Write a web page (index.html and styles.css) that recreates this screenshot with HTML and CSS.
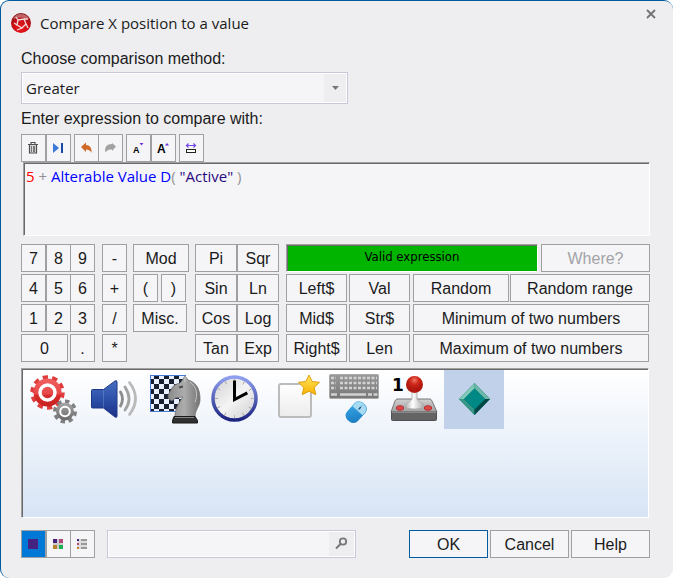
FILE: index.html
```html
<!DOCTYPE html>
<html lang="en">
<head>
<meta charset="utf-8">
<title>Compare X position to a value</title>
<link rel="stylesheet" href="styles.css">
</head>
<body>
<main class="dialog">
  <header class="titlebar">
    <svg class="app-icon" viewBox="0 0 20 20">
      <defs><radialGradient id="app" cx=".5" cy=".75" r=".7"><stop offset="0" stop-color="#f01820"/><stop offset=".6" stop-color="#c80c14"/><stop offset="1" stop-color="#8c1418"/></radialGradient></defs>
      <circle cx="10" cy="10" r="10" fill="url(#app)"/>
      <path d="M2 6a9 9 0 0 1 16 0Q10 3 2 6z" fill="#fff" opacity=".35"/>
      <g fill="none" stroke="#f3dede" stroke-width="1.3"><path d="M7 7l6-1 2 5-4 4-5-3z"/><path d="M7 7L5 4M13 6l4 0M15 11l2 4M11 15l-5 2M6 12l-3-2"/></g>
    </svg>
    <h1 class="title">Compare X position to a value</h1>
    <button class="close" aria-label="Close"><svg viewBox="0 0 10 10"><path d="M1 1l8 8M9 1l-8 8" stroke="#737373" stroke-width="1.800"/></svg></button>
  </header>

  <label class="label" for="method">Choose comparison method:</label>
  <div class="combo">
    <select id="method"><option>Greater</option></select>
    <svg class="combo-arrow" viewBox="0 0 22 28"><path d="M8 12h7l-3.500 4z" fill="#777"/></svg>
  </div>

  <label class="label expr-label" for="expression">Enter expression to compare with:</label>
  <div class="toolbar">
    <div class="joined">
      <button class="btn" aria-label="Clear"><svg viewBox="0 0 23 26"><path d="M6 9.500h10M9 9V7.500h4V9" fill="none" stroke="#505050" stroke-width="1.200"/><path d="M7.500 10v8h7v-8" fill="#d8d8d8" stroke="#505050" stroke-width="1.200"/><path d="M9.500 11v6M11.500 11v6M12.500 11v6" stroke="#606060" stroke-width=".8"/></svg></button>
      <button class="btn" aria-label="Go to end"><svg viewBox="0 0 23 26"><path d="M6 8l6 5-6 5z" fill="#3c78d8"/><path d="M14 8h2v10h-2z" fill="#1648a8"/></svg></button>
    </div>
    <div class="joined overlapped">
      <button class="btn" aria-label="Undo"><svg viewBox="0 0 23 26"><path d="M6 12l5-4.500V10c4 0 6 3 5.500 8-1-2-2.500-3.500-5.500-3.500V17z" fill="#d06a28"/></svg></button>
      <button class="btn" aria-label="Redo"><svg viewBox="0 0 23 26"><path d="M17 11.500L13 8v1C8 9 5 12 6.500 17.500 8 15 10 14.500 13 14.500V16z" fill="#a2a2a2"/></svg></button>
    </div>
    <div class="joined">
      <button class="btn" aria-label="Smaller text"><svg viewBox="0 0 23 26"><text x="6" y="18" class="glyph-small">A</text><path d="M12.500 8h4l-2 2.500z" fill="#7030e0"/></svg></button>
      <button class="btn" aria-label="Larger text"><svg viewBox="0 0 23 26"><text x="5" y="18" class="glyph-large">A</text><path d="M13 10.500L15 8l2 2.500z" fill="#7030e0"/></svg></button>
    </div>
    <button class="btn" aria-label="Fit width"><svg viewBox="0 0 23 26"><path d="M6.500 10.500h9M8.500 8.500l-2 2 2 2M13.500 8.500l2 2-2 2" fill="none" stroke="#7448e8" stroke-width="1.200"/><rect x="6.500" y="14.500" width="9" height="3" fill="#fff" stroke="#222"/></svg></button>
  </div>
  <div class="expression sunken" id="expression" role="textbox" contenteditable="true" aria-label="Expression" spellcheck="false"><span class="num">5</span> + <span class="name">Alterable Value D</span>( <span class="str">"Active"</span> )</div>

  <section class="keypad">
    <div class="digits">
      <div class="joined"><button class="btn">7</button><button class="btn">8</button><button class="btn">9</button></div>
      <div class="joined"><button class="btn">4</button><button class="btn">5</button><button class="btn">6</button></div>
      <div class="joined"><button class="btn">1</button><button class="btn">2</button><button class="btn">3</button></div>
      <div class="row"><button class="btn grow">0</button><button class="btn">.</button></div>
    </div>
    <div class="operators"><button class="btn">-</button><button class="btn">+</button><button class="btn">/</button><button class="btn">*</button></div>
    <div class="extras">
      <button class="btn wide">Mod</button>
      <div class="row parens"><button class="btn">(</button><button class="btn">)</button></div>
      <button class="btn misc">Misc.</button>
    </div>
    <div class="trig">
      <button class="btn">Pi</button><button class="btn">Sqr</button>
      <button class="btn">Sin</button><button class="btn">Ln</button>
      <button class="btn">Cos</button><button class="btn">Log</button>
      <button class="btn">Tan</button><button class="btn">Exp</button>
    </div>
    <div class="functions">
      <div class="row status-row"><output class="status sunken">Valid expression</output><button class="btn where" disabled>Where?</button></div>
      <div class="row"><button class="btn fn">Left$</button><button class="btn fn">Val</button><div class="randoms"><button class="btn">Random</button><button class="btn">Random range</button></div></div>
      <div class="row"><button class="btn fn">Mid$</button><button class="btn fn">Str$</button><button class="btn grow last">Minimum of two numbers</button></div>
      <div class="row"><button class="btn fn">Right$</button><button class="btn fn">Len</button><button class="btn grow last">Maximum of two numbers</button></div>
    </div>
  </section>

  <section class="objects sunken" aria-label="Objects">
    <button class="object" aria-label="Special">
      <svg viewBox="0 0 48 48">
        <defs><linearGradient id="red" x2="0" y2="1"><stop offset="0" stop-color="#f06060"/><stop offset=".55" stop-color="#e84848"/><stop offset=".6" stop-color="#d82c2c"/><stop offset="1" stop-color="#c82020"/></linearGradient><linearGradient id="grey" x2="0" y2="1"><stop offset="0" stop-color="#a8a8a8"/><stop offset="1" stop-color="#686868"/></linearGradient></defs>
        <circle cx="17.500" cy="17.500" r="15" fill="none" stroke="#df3c3c" stroke-width="4.500" pathLength="20" stroke-dasharray="1.100 .9"/>
        <circle cx="17.500" cy="17.500" r="14" fill="url(#red)"/>
        <circle cx="17.500" cy="17.500" r="7.500" fill="none" stroke="#fff" stroke-width="3.500"/>
        <circle cx="35" cy="36.500" r="10" fill="none" stroke="#808080" stroke-width="4" pathLength="16" stroke-dasharray="1.100 .9"/>
        <circle cx="35" cy="36.500" r="9" fill="url(#grey)"/>
        <circle cx="35" cy="36.500" r="4.800" fill="none" stroke="#fff" stroke-width="2"/>
      </svg>
    </button>
    <button class="object" aria-label="Sound">
      <svg viewBox="0 0 48 48">
        <defs><linearGradient id="blue" x2="0" y2="1"><stop offset="0" stop-color="#4870c0"/><stop offset=".5" stop-color="#2c50a8"/><stop offset="1" stop-color="#1c3088"/></linearGradient></defs>
        <path d="M2.500 14.500h11L25 6q2-1 2 1v34q0 2-2 1l-11.500-9h-11q-1 0-1-1V15.500q0-1 1-1z" fill="url(#blue)" stroke="#1e3888"/>
        <path d="M13.500 15v17.500" stroke="#6f8fd0" opacity=".5"/>
        <g fill="none" stroke-width="2.800" stroke-linecap="round"><path d="M30.500 17q4 7 0 14" stroke="#8c8c8c"/><path d="M35 12q8 12 0 23" stroke="#a2a2a2"/><path d="M39.500 7.500q12 16 0 32" stroke="#bababa"/></g>
      </svg>
    </button>
    <button class="object" aria-label="Storyboard">
      <svg viewBox="0 0 50 50" class="larger">
        <defs><pattern id="chess" width="10" height="10" patternUnits="userSpaceOnUse"><rect width="10" height="10" fill="#e8f0ff"/><path d="M0 5h5V0h5v5H5v5H0z" fill="#182030"/></pattern><linearGradient id="horse"><stop offset="0" stop-color="#8a8a8a"/><stop offset=".5" stop-color="#acacac"/><stop offset="1" stop-color="#747474"/></linearGradient></defs>
        <rect x="1.500" y="1.500" width="35" height="36" fill="url(#chess)" stroke="#4878d0"/>
        <path d="M26 43c0-8 3-13 8-20-4 1-7 0-9 2-1 2-3 2-5 0-2-3 0-6 2-9 1-4 5-6 9-7 2-2 3-4 5-7l3 4c8 2 12 9 12 19 0 8-5 10-5 18z" fill="url(#horse)" stroke="#707070" stroke-width=".8"/>
        <path d="M41 8c7 5 8 13 5 20" fill="none" stroke="#c4c4c4"/><path d="M30 13.500l4-1" stroke="#4c4c4c" stroke-width="2"/><path d="M36 2v6" stroke="#d0d0d0"/>
        <path d="M25 42.500h21l2.500 4v2.500h-25v-2.500z" fill="#303030" stroke="#181818"/><path d="M26 43.500h19" stroke="#888"/>
      </svg>
    </button>
    <button class="object" aria-label="Timer">
      <svg viewBox="0 0 48 48">
        <defs><linearGradient id="rim" x2="0" y2="1"><stop offset="0" stop-color="#90a0f0"/><stop offset="1" stop-color="#1c2480"/></linearGradient><linearGradient id="dial" x2="1" y2="1"><stop offset="0" stop-color="#d0d0d0"/><stop offset=".5" stop-color="#f4f4f4"/><stop offset="1" stop-color="#ccc"/></linearGradient></defs>
        <circle cx="24.500" cy="23.500" r="21.500" fill="url(#dial)" stroke="url(#rim)" stroke-width="3.500"/>
        <circle cx="24.500" cy="23.500" r="18" fill="none" stroke="#777" stroke-width="3" pathLength="120" stroke-dasharray=".5 9.500"/>
        <path d="M24.500 7v17.500L36 18.500" fill="none" stroke="#000" stroke-width="3" stroke-linecap="square"/>
      </svg>
    </button>
    <button class="object" aria-label="Create new objects">
      <svg viewBox="0 0 48 48">
        <defs><linearGradient id="sheet" x2="0" y2="1"><stop offset="0" stop-color="#fff"/><stop offset="1" stop-color="#ececec"/></linearGradient><linearGradient id="star" x2="0" y2="1"><stop offset="0" stop-color="#ffe860"/><stop offset="1" stop-color="#f8b000"/></linearGradient></defs>
        <rect x="9" y="9" width="32" height="33" rx="2" fill="url(#sheet)" stroke="#bcbcbc" stroke-width="2"/>
        <path d="M39 0l3.200 6.500 7.300.8-5.300 5.200 1.600 7.200-6.800-3.400-6.800 3.400 1.600-7.200-5.300-5.200 7.300-.8z" fill="url(#star)" stroke="#e0a010" stroke-linejoin="round"/>
      </svg>
    </button>
    <button class="object" aria-label="The mouse pointer and keyboard">
      <svg viewBox="0 0 50 50" class="larger">
        <defs><linearGradient id="board" x2="0" y2="1"><stop offset="0" stop-color="#999"/><stop offset="1" stop-color="#777"/></linearGradient><linearGradient id="mouse" x2="1" y2="1"><stop offset="0" stop-color="#3cacec"/><stop offset="1" stop-color="#1878bc"/></linearGradient></defs>
        <rect x=".5" y=".5" width="49" height="24" rx="1" fill="url(#board)" stroke="#aaa"/>
        <g stroke="#d2d2d2" stroke-width="2.500" fill="none"><path d="M2 4h5M11 4h37" stroke-dasharray="3 1.500"/><path d="M2 9h5M11 9h37" stroke-dasharray="3 1.500"/><path d="M2 14h5M11 14h37" stroke-dasharray="3 1.500"/><path d="M2 20.500h6M11 20.500h26M39 20.500h4M44.500 20.500h4"/></g>
        <g transform="rotate(42 27 38)"><rect x="20" y="26.500" width="14.500" height="23" rx="6" fill="url(#mouse)"/><path d="M20.500 36v-3q0-6 6.500-6t7 6v3z" fill="#a8daf2"/><path d="M27.200 28v8" stroke="#58a8d0" stroke-width=".7"/><path d="M27.200 31v3" stroke="#235a88" stroke-width="1.500"/></g>
      </svg>
    </button>
    <button class="object" aria-label="Player 1">
      <svg viewBox="0 0 48 48">
        <defs><linearGradient id="base" x2="0" y2="1"><stop offset="0" stop-color="#d0d0d0"/><stop offset="1" stop-color="#a0a0a0"/></linearGradient><linearGradient id="stick"><stop offset="0" stop-color="#aaa"/><stop offset=".4" stop-color="#fff"/><stop offset="1" stop-color="#aaa"/></linearGradient><radialGradient id="ball" cx=".5" cy=".25"><stop offset="0" stop-color="#f07868"/><stop offset=".5" stop-color="#d02818"/><stop offset="1" stop-color="#b01810"/></radialGradient></defs>
        <text x="2" y="16" class="player">1</text>
        <path d="M7 24h33q1 0 2 2l5 11H1l4-11q1-2 2-2z" fill="url(#base)" stroke="#777"/>
        <rect x="1.500" y="36.500" width="45" height="9" rx="1" fill="#646464" stroke="#505050"/><path d="M2 37h44" stroke="#aaa"/>
        <path d="M22 15h5v9c1 3 7 4 7 7 0 4-19 4-19 0 0-3 6-4 7-7z" fill="url(#stick)" stroke="#aaa" stroke-width=".8"/>
        <circle cx="24.500" cy="9.500" r="8.500" fill="url(#ball)"/>
        <g fill="#e04848" stroke="#b03030"><ellipse cx="10" cy="33" rx="3.800" ry="2.300"/><ellipse cx="38" cy="33" rx="3.800" ry="2.300"/></g>
      </svg>
    </button>
    <button class="object selected" aria-label="Active" aria-pressed="true">
      <svg viewBox="0 0 48 48">
        <path d="M24.500 8L40 24 24.500 40 9 24z" fill="#006c68"/>
        <path d="M24.500 8v5.500L14 24H9z" fill="#80c8b8"/><path d="M24.500 8v5.500L35 24h5z" fill="#6cb8a8"/>
        <path d="M9 24h5l10.500 10.500V40z" fill="#389888"/><path d="M40 24h-5L24.500 34.500V40z" fill="#004846"/>
        <path d="M24.500 13.500L35 24 24.500 34.500 14 24z" fill="#008884"/>
      </svg>
    </button>
  </section>

  <footer class="footer">
    <div class="joined">
      <button class="btn active" aria-label="Large icons"><svg viewBox="0 0 23 26"><rect x="6" y="8" width="10" height="10" fill="#442480"/></svg></button>
      <button class="btn" aria-label="Small icons"><svg viewBox="0 0 23 26"><path d="M6 8h10v10H6z" fill="#ccc"/><path d="M6 8h4v4H6z" fill="#442480"/><path d="M12 8h4v4h-4z" fill="#b04878"/><path d="M6 14h4v4H6z" fill="#b88028"/><path d="M12 14h4v4h-4z" fill="#18b050"/></svg></button>
      <button class="btn" aria-label="List"><svg viewBox="0 0 23 26"><path d="M6 8h10v10H6z" fill="#dcdcdc"/><path d="M6 8h2v2H6z" fill="#442480"/><path d="M6 12h2v2H6z" fill="#b04878"/><path d="M6 16h2v2H6z" fill="#b88028"/><path d="M10 8h6v2h-6zM10 12h6v2h-6zM10 16h6v2h-6z" fill="#999"/></svg></button>
    </div>
    <div class="search"><input type="search" aria-label="Search objects"><button aria-label="Search"><svg viewBox="0 0 25 24"><circle cx="14" cy="9.500" r="3.200" fill="none" stroke="#777" stroke-width="1.800"/><path d="M11.500 12L7 16.500" stroke="#777" stroke-width="2"/></svg></button></div>
    <div class="actions"><button class="btn default">OK</button><button class="btn">Cancel</button><button class="btn">Help</button></div>
  </footer>
</main>
</body>
</html>
```

FILE: styles.css
```css
* { box-sizing: border-box; }

body {
  margin: 0;
  background: #fff;
  color: #1b1b1b;
  font: 16px/20px "Liberation Sans", Arial, sans-serif;
}

.dialog {
  display: flex;
  flex-direction: column;
  min-height: 100vh;
  padding: 0 23px 20px 20px;
  background: #eeeef0;
  border: 1px solid #005a9e;
  border-width: 1px 0 0 1px;
  border-radius: 9px;
}

button { padding: 0; font: inherit; color: inherit; }
svg { display: block; }

/* Title bar */
.titlebar { display: flex; align-items: center; height: 44px; margin: 0 -10px; }
.app-icon { width: 20px; height: 20px; }
.title { margin: 0 auto 0 9px; font: 15px/20px "Open Sans", "Noto Sans", sans-serif; }
.close { align-self: flex-start; margin: 7px 3px 0 0; width: 12px; height: 12px; padding: 1px; border: 0; background: none; }

.label { margin-top: 4px; }

/* Combo box */
.combo {
  display: flex;
  width: 327px;
  height: 32px;
  margin-top: 3px;
  padding: 1px;
  border: 1px solid #c8c8da;
  background: #fff;
}
.combo select {
  flex: 1;
  padding: 0 3px;
  border: 0;
  border-radius: 0;
  appearance: none;
  background: #f5f5f8;
  color: inherit;
  font: 15px/20px "Open Sans", "Noto Sans", sans-serif;
}
.combo-arrow { width: 22px; height: 28px; background: #eeeef0; }
.expr-label { margin-top: 5px; }

/* Buttons */
.btn {
  flex: none;
  width: 25px;
  height: 28px;
  padding-top: 1px;
  border: 1px solid #a0a0a3;
  border-radius: 0;
  background: #f5f5f8;
  white-space: nowrap;
}
.btn:has(svg) { padding-top: 0; }
.btn svg { width: 100%; height: 26px; }
.btn.grow { flex: 1; width: auto; }
.btn:disabled { color: #a3a3a6; }
.btn.default { border-color: #005a9e; }
.btn.active { background: #0078d7; }
.joined { display: flex; }
.joined .btn:nth-child(3),
.overlapped .btn + .btn { margin-left: -1px; }
.row { display: flex; gap: 2px; }

.toolbar { display: flex; gap: 3px; margin-top: 5px; }
.glyph-small { font: bold 9px "Liberation Sans", Arial, sans-serif; }
.glyph-large { font: bold 12px "Liberation Sans", Arial, sans-serif; }

.sunken {
  border: 1px solid;
  border-color: #a0a0a0 #fff #fff #a0a0a0;
  box-shadow: inset 1px 1px #696969;
}

.expression {
  min-height: 74px;
  margin-left: 2px;
  padding: 3px 2px;
  background: #f5f5f8;
  color: #929296;
  font: 15px/20px "Open Sans", "Noto Sans", sans-serif;
}
.num { color: #f00; }
.name { color: #00f; }
.str { color: #2a0a80; }

/* Keypad */
.keypad { display: flex; gap: 6px; margin-top: 8px; }
.digits, .operators, .extras, .functions { display: flex; flex-direction: column; gap: 2px; }
.digits { width: 74px; margin-right: 1px; }
.extras { width: 56px; }
.extras .wide { width: 56px; }
.extras .misc { width: 54px; }
.parens { gap: 3px; }
.trig { display: grid; grid-template-columns: 42px 42px; gap: 2px 0; margin-right: 1px; }
.trig .btn { width: 42px; }
.functions { flex: 1; }
.functions .fn { width: 61px; }
.functions .last { margin: 0 1px; }
.status-row { gap: 3px; }
.status {
  flex: 1;
  background: #00b400;
  color: #000;
  font: 13px/24px "DejaVu Sans Condensed", "DejaVu Sans", sans-serif;
  text-align: center;
}
.functions .where { width: 109px; }
.randoms { display: grid; flex: 1; grid-template-columns: 96fr 140fr; gap: 1px; margin-left: 1px; }
.randoms .btn { width: auto; }

/* Object list */
.objects {
  display: flex;
  flex: 1;
  flex-wrap: wrap;
  align-content: flex-start;
  min-height: 149px;
  margin-top: 6px;
  margin-right: 1px;
  padding: 1px 0 0 2px;
  background: linear-gradient(#fff, #d7e4f5);
}
.object { width: 60px; height: 59px; padding: 5px 6px 6px; border: 0; background: none; }
.object svg { width: 48px; height: 48px; overflow: visible; }
.object svg.larger { width: 50px; height: 50px; margin: -1px; }
.object.selected { background: #c2d1ea; }
.player { font: bold 17px "DejaVu Sans", sans-serif; }

/* Footer */
.footer { display: flex; margin-top: 12px; }
.search {
  display: flex;
  width: 249px;
  height: 28px;
  margin-left: 12px;
  padding: 1px;
  border: 1px solid #c8c8da;
  background: #fff;
}
.search input { flex: 1; min-width: 0; border: 0; background: #f5f5f8; font: inherit; }
.search button { width: 25px; border: 0; background: #eeeef0; }
.actions { display: flex; gap: 2px; margin-left: auto; }
.actions .btn { width: 79px; }
```
